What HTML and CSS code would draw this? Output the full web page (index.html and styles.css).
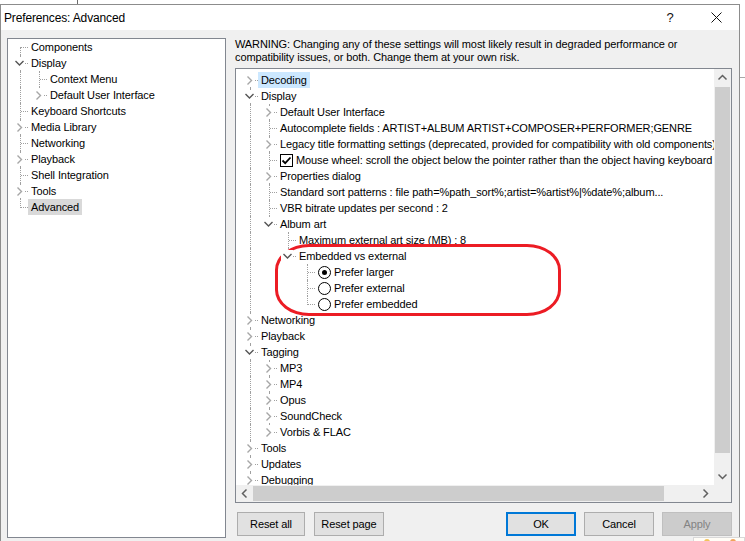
FILE: index.html
```html
<!DOCTYPE html>
<html>
<head>
<meta charset="utf-8">
<title>Preferences: Advanced</title>
<link rel="stylesheet" href="styles.css">
</head>
<body>
<svg class="defs" width="0" height="0" aria-hidden="true">
  <symbol id="c" viewBox="0 0 16 16"><rect x="1" y="2" width="12" height="12" fill="#fff"/><path d="M5.5 4.5L9.5 8.5L5.5 12.5" fill="none" stroke="#a6a6a6" stroke-width="1.4"/></symbol>
  <symbol id="e" viewBox="0 0 16 16"><rect x="1" y="2" width="12" height="12" fill="#fff"/><path d="M3.5 6L7.5 10L11.5 6" fill="none" stroke="#555" stroke-width="1.4"/></symbol>
  <symbol id="su" viewBox="0 0 17 17"><path d="M4.5 10.5L8.5 6.5L12.5 10.5" fill="none" stroke="#606060" stroke-width="1.5"/></symbol>
  <symbol id="sd" viewBox="0 0 17 17"><path d="M4.5 6.5L8.5 10.5L12.5 6.5" fill="none" stroke="#606060" stroke-width="1.5"/></symbol>
  <symbol id="sl" viewBox="0 0 17 17"><path d="M10.5 4.5L6.5 8.5L10.5 12.5" fill="none" stroke="#606060" stroke-width="1.5"/></symbol>
  <symbol id="sr" viewBox="0 0 17 17"><path d="M6.5 4.5L10.5 8.5L6.5 12.5" fill="none" stroke="#606060" stroke-width="1.5"/></symbol>
</svg>
<div class="window">
  <div class="titlebar">
    <div class="title">Preferences: Advanced</div>
    <div class="tbtn help">?</div>
    <div class="tbtn close"><svg width="11" height="11" viewBox="0 0 11 11"><path d="M0.5 0.5L10.5 10.5M10.5 0.5L0.5 10.5" stroke="#111" stroke-width="1"/></svg></div>
  </div>
  <div class="client">
    <div class="pages">
      <div class="row"><span class="b d"></span><span class="lbl">Components</span></div>
      <div class="row"><span class="b f"><svg class="ic"><use href="#e"/></svg></span><span class="lbl">Display</span></div>
      <div class="row"><span class="g v"></span><span class="b f"></span><span class="lbl">Context Menu</span></div>
      <div class="row"><span class="g v"></span><span class="b t"><svg class="ic"><use href="#c"/></svg></span><span class="lbl">Default User Interface</span></div>
      <div class="row"><span class="b f"></span><span class="lbl">Keyboard Shortcuts</span></div>
      <div class="row"><span class="b f"><svg class="ic"><use href="#c"/></svg></span><span class="lbl">Media Library</span></div>
      <div class="row"><span class="b f"></span><span class="lbl">Networking</span></div>
      <div class="row"><span class="b f"><svg class="ic"><use href="#c"/></svg></span><span class="lbl">Playback</span></div>
      <div class="row"><span class="b f"></span><span class="lbl">Shell Integration</span></div>
      <div class="row"><span class="b f"><svg class="ic"><use href="#c"/></svg></span><span class="lbl">Tools</span></div>
      <div class="row"><span class="b t"></span><span class="lbl sel-gray">Advanced</span></div>
    </div>
    <div class="main">
      <div class="warning">WARNING: Changing any of these settings will most likely result in degraded performance or<br>compatibility issues, or both. Change them at your own risk.</div>
      <div class="box">
        <div class="box-top">
          <div class="tree">
            <div class="row"><span class="b d"><svg class="ic"><use href="#c"/></svg></span><span class="lbl sel-blue">Decoding</span></div>
            <div class="row"><span class="b f"><svg class="ic"><use href="#e"/></svg></span><span class="lbl">Display</span></div>
            <div class="row"><span class="g v"></span><span class="b f"><svg class="ic"><use href="#c"/></svg></span><span class="lbl">Default User Interface</span></div>
            <div class="row"><span class="g v"></span><span class="b f"></span><span class="lbl">Autocomplete fields : ARTIST+ALBUM ARTIST+COMPOSER+PERFORMER;GENRE</span></div>
            <div class="row"><span class="g v"></span><span class="b f"><svg class="ic"><use href="#c"/></svg></span><span class="lbl">Legacy title formatting settings (deprecated, provided for compatibility with old components)</span></div>
            <div class="row"><span class="g v"></span><span class="b f"></span><span class="lbl"><span class="chk"><svg width="11" height="11" viewBox="0 0 11 11"><path d="M1.5 5.5L4.2 8.2L9.5 2.5" fill="none" stroke="#000" stroke-width="1.8"/></svg></span>Mouse wheel: scroll the object below the pointer rather than the object having keyboard focus</span></div>
            <div class="row"><span class="g v"></span><span class="b f"><svg class="ic"><use href="#c"/></svg></span><span class="lbl">Properties dialog</span></div>
            <div class="row"><span class="g v"></span><span class="b f"></span><span class="lbl">Standard sort patterns : file path=%path_sort%;artist=%artist%|%date%;album...</span></div>
            <div class="row"><span class="g v"></span><span class="b f"></span><span class="lbl">VBR bitrate updates per second : 2</span></div>
            <div class="row"><span class="g v"></span><span class="b t"><svg class="ic"><use href="#e"/></svg></span><span class="lbl">Album art</span></div>
            <div class="row"><span class="g v"></span><span class="g"></span><span class="b f"></span><span class="lbl">Maximum external art size (MB) : 8</span></div>
            <div class="row"><span class="g v"></span><span class="g"></span><span class="b t"><svg class="ic"><use href="#e"/></svg></span><span class="lbl">Embedded vs external</span></div>
            <div class="row"><span class="g v"></span><span class="g"></span><span class="g"></span><span class="b f"></span><span class="lbl"><span class="rad on"></span>Prefer larger</span></div>
            <div class="row"><span class="g v"></span><span class="g"></span><span class="g"></span><span class="b f"></span><span class="lbl"><span class="rad"></span>Prefer external</span></div>
            <div class="row"><span class="g v"></span><span class="g"></span><span class="g"></span><span class="b t"></span><span class="lbl"><span class="rad"></span>Prefer embedded</span></div>
            <div class="row"><span class="b f"><svg class="ic"><use href="#c"/></svg></span><span class="lbl">Networking</span></div>
            <div class="row"><span class="b f"><svg class="ic"><use href="#c"/></svg></span><span class="lbl">Playback</span></div>
            <div class="row"><span class="b f"><svg class="ic"><use href="#e"/></svg></span><span class="lbl">Tagging</span></div>
            <div class="row"><span class="g v"></span><span class="b f"><svg class="ic"><use href="#c"/></svg></span><span class="lbl">MP3</span></div>
            <div class="row"><span class="g v"></span><span class="b f"><svg class="ic"><use href="#c"/></svg></span><span class="lbl">MP4</span></div>
            <div class="row"><span class="g v"></span><span class="b f"><svg class="ic"><use href="#c"/></svg></span><span class="lbl">Opus</span></div>
            <div class="row"><span class="g v"></span><span class="b f"><svg class="ic"><use href="#c"/></svg></span><span class="lbl">SoundCheck</span></div>
            <div class="row"><span class="g v"></span><span class="b t"><svg class="ic"><use href="#c"/></svg></span><span class="lbl">Vorbis &amp; FLAC</span></div>
            <div class="row"><span class="b f"><svg class="ic"><use href="#c"/></svg></span><span class="lbl">Tools</span></div>
            <div class="row"><span class="b f"><svg class="ic"><use href="#c"/></svg></span><span class="lbl">Updates</span></div>
            <div class="row"><span class="b f"><svg class="ic"><use href="#c"/></svg></span><span class="lbl">Debugging</span></div>
          </div>
          <div class="vscroll">
            <div class="sbtn"><svg class="sarr"><use href="#su"/></svg></div>
            <div class="vtrack"><div class="vthumb"></div></div>
            <div class="sbtn"><svg class="sarr"><use href="#sd"/></svg></div>
          </div>
        </div>
        <div class="hscroll">
          <div class="sbtn"><svg class="sarr"><use href="#sl"/></svg></div>
          <div class="hthumb"></div>
          <div class="htrack"></div>
          <div class="sbtn"><svg class="sarr"><use href="#sr"/></svg></div>
          <div class="corner"></div>
        </div>
        <div class="mark"></div>
      </div>
      <div class="buttons">
        <div class="btn reset-all">Reset all</div>
        <div class="btn reset-page">Reset page</div>
        <div class="btn def ok">OK</div>
        <div class="btn cancel">Cancel</div>
        <div class="btn dis apply">Apply</div>
      </div>
    </div>
  </div>
</div>
<div class="peek"><span class="dot1"></span><span class="dot2"></span></div>
</body>
</html>
```
FILE: styles.css
```css
* { box-sizing: border-box; }

html { background: #fff; }

body {
  margin: 0;
  width: 745px;
  height: 541px;
  overflow: hidden;
  position: relative;
  font-family: "Liberation Sans", Arial, sans-serif;
  font-size: 11px;
  letter-spacing: -0.1px;
  color: #000;
  background:
    linear-gradient(#6b6b6b, #6b6b6b) 77px 0 / 1px 4px no-repeat,
    linear-gradient(#a8a8a8, #a8a8a8) 740px 77px / 5px 1px no-repeat,
    #fff;
}

.defs { position: absolute; width: 0; height: 0; overflow: hidden; }

.window {
  margin-top: 4px;
  width: 740px;
  height: 560px;
  border: 1px solid #8c8c8c;
  border-bottom: 0;
  background: #f0f0f0;
  display: flex;
  flex-direction: column;
}

.titlebar {
  height: 25px;
  flex: none;
  background: #fff;
  display: flex;
  align-items: center;
  padding-left: 3px;
  font-size: 12px;
  letter-spacing: -0.15px;
}
.title { flex: 1; }
.tbtn {
  width: 46px;
  height: 25px;
  display: flex;
  align-items: center;
  justify-content: center;
}
.help { font-size: 13px; color: #111; }

.client {
  display: flex;
  padding: 8px 7px 0 6px;
  flex: 1;
}

.pages {
  flex: none;
  width: 219px;
  height: 500px;
  border: 1px solid #828790;
  background: #fff;
  padding-left: 4px;
}

.main {
  margin-left: 9px;
  width: 497px;
  display: flex;
  flex-direction: column;
}

.warning {
  line-height: 13px;
  height: 26px;
  white-space: nowrap;
}

.box {
  margin-top: 4px;
  height: 435px;
  border: 1px solid #828790;
  background: #fff;
  display: flex;
  flex-direction: column;
  position: relative;
}
.box-top {
  display: flex;
  flex: 1;
  min-height: 0;
}
.tree {
  flex: 1;
  overflow: hidden;
  padding: 3px 0 0 6px;
}

/* tree rows */
.row {
  display: flex;
  height: 16px;
  line-height: 16px;
  white-space: nowrap;
}
.g, .b {
  position: relative;
  flex: none;
  height: 16px;
}
.g { width: 19px; }
.b { width: 16px; }
.g.v::before,
.b.f::before,
.b.t::before,
.b.d::before {
  content: "";
  position: absolute;
  left: 8px;
  border-left: 1px dotted #a0a0a0;
}
.g.v::before, .b.f::before { top: 0; height: 16px; }
.b.t::before { top: 0; height: 9px; }
.b.d::before { top: 8px; height: 8px; }
.b::after {
  content: "";
  position: absolute;
  left: 9px;
  right: 0;
  top: 8px;
  border-top: 1px dotted #a0a0a0;
}
.ic {
  position: absolute;
  left: 0;
  top: 0;
  width: 16px;
  height: 16px;
  z-index: 1;
}
.lbl {
  display: inline-flex;
  align-items: center;
  height: 16px;
  padding: 0 3px;
}
.sel-gray { background: #d9d9d9; }
.sel-blue { background: #cce8ff; }

.chk {
  width: 13px;
  height: 13px;
  border: 1px solid #000;
  background: #fff;
  margin-right: 3px;
  display: inline-flex;
  align-items: center;
  justify-content: center;
}
.rad {
  width: 13px;
  height: 13px;
  border: 1.6px solid #000;
  border-radius: 50%;
  background: #fff;
  margin-right: 3px;
  display: inline-flex;
  align-items: center;
  justify-content: center;
}
.rad.on::after {
  content: "";
  width: 5px;
  height: 5px;
  border-radius: 50%;
  background: #000;
}

/* scrollbars */
.vscroll {
  width: 17px;
  flex: none;
  background: #f0f0f0;
  display: flex;
  flex-direction: column;
}
.sbtn {
  width: 17px;
  height: 17px;
  flex: none;
}
.sarr { width: 17px; height: 17px; display: block; }
.vtrack { flex: 1; }
.vthumb {
  margin: 1px 1px 0;
  height: 366px;
  background: #cdcdcd;
}
.hscroll {
  height: 17px;
  flex: none;
  display: flex;
  background: #f0f0f0;
}
.hthumb {
  width: 411px;
  margin: 1px 0;
  background: #cdcdcd;
}
.htrack { flex: 1; }
.corner { width: 17px; background: #f0f0f0; }

.mark {
  position: absolute;
  left: 39px;
  top: 175px;
  width: 286px;
  height: 72px;
  border: 3px solid #ec1c24;
  border-radius: 34px / 26px;
  pointer-events: none;
}

/* buttons */
.buttons {
  margin-top: 9px;
  height: 24px;
  display: flex;
}
.btn {
  height: 24px;
  width: 70px;
  border: 1px solid #adadad;
  background: #e1e1e1;
  display: flex;
  align-items: center;
  justify-content: center;
}
.reset-all { width: 68px; margin-left: 2px; }
.reset-page { margin-left: 9px; }
.ok { margin-left: auto; }
.cancel, .apply { margin-left: 8px; }
.btn.def { border: 2px solid #0078d7; }
.btn.dis { background: #cccccc; border-color: #bfbfbf; color: #838383; }

.peek {
  position: absolute;
  left: 693px;
  top: 537px;
  width: 52px;
  height: 6px;
  background: #fffdf7;
  border: 1px solid #d8d8d8;
}
.dot1, .dot2 {
  position: absolute;
  top: 1px;
  width: 6px;
  height: 4px;
  border-radius: 3px 3px 0 0;
  background: #f3c35b;
}
.dot1 { left: 10px; }
.dot2 { left: 36px; background: #f0a35b; }
```
